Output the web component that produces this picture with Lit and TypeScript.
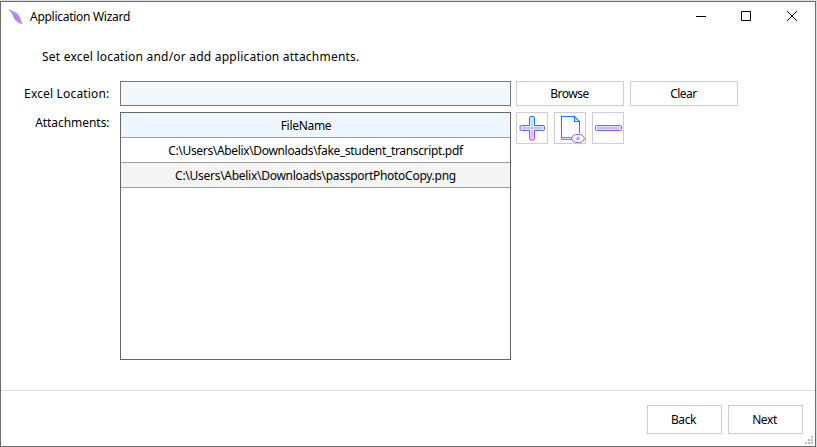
import { LitElement, html, svg, css } from "lit";
import { customElement, property } from "lit/decorators.js";

@customElement("tool-icon")
class ToolIcon extends LitElement {
  @property() name = "add";
  static styles = css`
    :host { display: block; width: 30px; height: 30px; }
    svg { display: block; }
  `;
  render() {
    const shapes: Record<string, unknown> = {
      add: svg`<path d="M14 3.500h2q1.500 0 1.500 1.500v7.500h8.500q1.500 0 1.500 1.500v2q0 1.500-1.500 1.500h-8.500v8q0 1.500-1.500 1.500h-2q-1.500 0-1.500-1.500v-8h-8q-1.500 0-1.500-1.500v-2q0-1.500 1.500-1.500h8v-7.500q0-1.500 1.500-1.500z" fill="#e6e4fd" stroke="url(#g)" stroke-width="1"/><path d="M5 15h20" stroke="#9cc4f4" stroke-width="1.500"/><path d="M15 6v8" stroke="#b4e4ff" stroke-width="2"/><path d="M15 17v8" stroke="#efb4f8" stroke-width="2"/>`,
      view: svg`<path d="M6.500 26V3.500H19.500L24.500 8.500V20M19.500 3.500V8.500H24.500" fill="none" stroke="url(#g)" stroke-width="1.100"/><path d="M6 26.500H18M7 24.500H17" stroke="#c86cf5" fill="none"/><path d="M6 25.500H17" stroke="#e6c4fa"/><ellipse cx="23" cy="25.500" rx="6.300" ry="4.300" fill="#fff" stroke="#b63cf3" stroke-width="1"/><path d="M21 25.500h4M23 23.500v4" stroke="#7fb4f8" stroke-width="1.300"/>`,
      remove: svg`<rect x="2.500" y="12.500" width="26" height="5" rx="1" fill="#e6e0fc" stroke="url(#h)" stroke-width="1"/><path d="M5 15h21" stroke="#a5bdf4" stroke-width="1.500"/>`,
    };
    return html`<svg width="30" height="30" viewBox="0 0 30 30">
      <defs>
        <linearGradient id="g" gradientUnits="userSpaceOnUse" x1="0" y1="3" x2="0" y2="28"><stop offset="0" stop-color="#0878ff"/><stop offset=".5" stop-color="#6268f4"/><stop offset="1" stop-color="#c136f5"/></linearGradient>
        <linearGradient id="h" gradientUnits="userSpaceOnUse" x1="0" y1="12" x2="0" y2="18"><stop offset="0" stop-color="#5f76f5"/><stop offset="1" stop-color="#a54af2"/></linearGradient>
      </defs>${shapes[this.name]}</svg>`;
  }
}

@customElement("app-root")
class AppRoot extends LitElement {
  files = [
    "C:\\Users\\Abelix\\Downloads\\fake_student_transcript.pdf",
    "C:\\Users\\Abelix\\Downloads\\passportPhotoCopy.png",
  ];
  static styles = css`
    :host { display: block; width: 817px; height: 447px; padding: 1px 1px 0 0; box-sizing: border-box; background: #dcdcdc; font: 12px/16px "Noto Sans", "Open Sans", sans-serif; color: #000; overflow: hidden; }
    * { box-sizing: border-box; }
    .window { height: 446px; border: 1px solid #6b6b6b; background: #fff; display: flex; flex-direction: column; }
    .title { height: 30px; display: flex; align-items: center; padding-left: 7px; }
    .title span { margin-left: 6px; flex: 1; letter-spacing: -.28px; }
    .title svg { display: block; }
    .content { flex: 1; padding: 17px 0 0 10px; }
    h1 { margin: 0 0 0 31px; font: inherit; letter-spacing: .22px; height: 32px; }
    .form { display: grid; grid-template-columns: 99px 391px auto; column-gap: 10px; row-gap: 6px; }
    .label { text-align: right; padding: 5px .5px 0 0; white-space: nowrap; letter-spacing: .17px; }
    .attach { padding-top: 3px; letter-spacing: -.05px; }
    .field { height: 25px; border: 1px solid #777; background: #f3f8fd; }
    .grid { height: 248px; border: 1px solid #666; }
    .row { height: 25px; line-height: 25px; letter-spacing: -.34px; text-align: center; border-bottom: 1px solid #a0a0a0; }
    .header { background: #eef7ff; padding-right: 19px; letter-spacing: -.3px; }
    .alt { background: #f4f4f4; letter-spacing: -.28px; }
    .actions { display: flex; gap: 6px; margin-left: -5px; }
    .btn { width: 108px; height: 25px; padding-right: 1px; border: 1px solid #cdcbdc; line-height: 23px; letter-spacing: -.5px; text-align: center; }
    .tool { width: 32px; height: 32px; border: 1px solid #cdcbdc; }
    .footer { height: 56px; border-top: 1px solid #dfdfdf; display: flex; justify-content: flex-end; gap: 6px; padding: 14px 12px 0 0; position: relative; }
    .footer .btn { width: 75px; height: 29px; padding-right: 2px; line-height: 27px; letter-spacing: -.4px; }
    .grip { position: absolute; right: 1px; bottom: 1px; }
  `;
  render() {
    return html`<div class="window">
      <div class="title">
        <svg width="16" height="18" viewBox="0 0 16 18"><path d="M1 2C8 3.500 11 6 12.500 11L13.500 14.500L15.500 16L12 15.500C7 13 5.500 10 4.500 6.500Z" fill="#b98af5"/><path d="M1 1.500L6 6" stroke="#b49aa9"/><path d="M5 6L13 15.500" stroke="#a875ea" stroke-width=".7"/></svg>
        <span>Application Wizard</span>
        <svg width="120" height="30" viewBox="0 0 120 30" fill="none" stroke="#000"><path d="M1 14.500h10M46.500 9.500h9v9h-9zM92 9l10 10M102 9l-10 10"/></svg>
      </div>
      <div class="content">
        <h1>Set excel location and/or add application attachments.</h1>
        <div class="form">
          <div class="label">Excel Location:</div><div class="field"></div>
          <div class="actions"><div class="btn">Browse</div><div class="btn">Clear</div></div>
          <div class="label attach">Attachments:</div>
          <div class="grid"><div class="row header">FileName</div>${this.files.map((f, i) => html`<div class="row ${i % 2 ? "alt" : ""}">${f}</div>`)}</div>
          <div class="actions">${["add", "view", "remove"].map((n) => html`<div class="tool"><tool-icon name=${n}></tool-icon></div>`)}</div>
        </div>
      </div>
      <div class="footer"><div class="btn">Back</div><div class="btn">Next</div>
        <svg class="grip" width="9" height="9" fill="#bdbdbd"><path d="M6 0h2v2h-2zM3 3h2v2h-2zM6 3h2v2h-2zM0 6h2v2h-2zM3 6h2v2h-2zM6 6h2v2h-2z"/></svg>
      </div>
    </div>`;
  }
}
